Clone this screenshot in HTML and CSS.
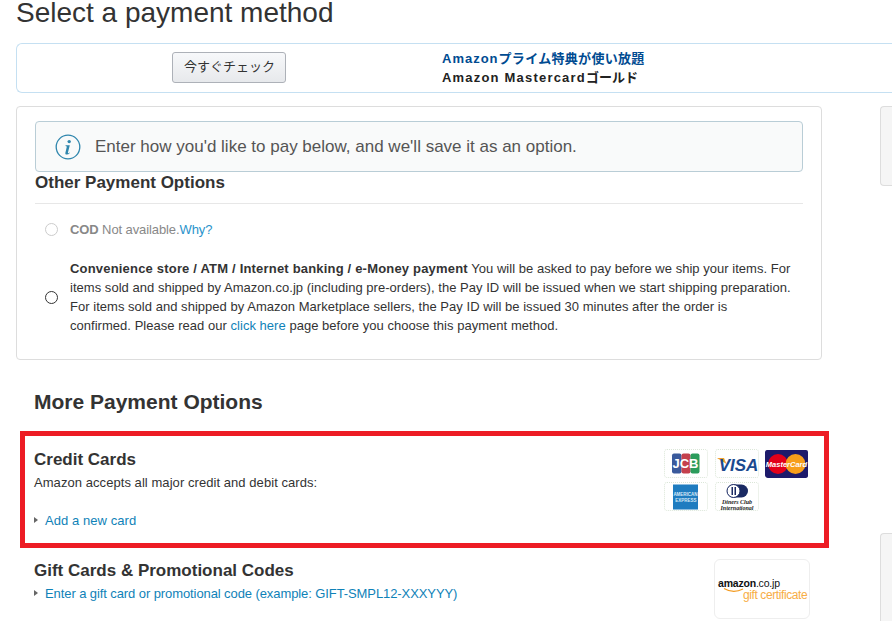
FILE: index.html

```html
<!DOCTYPE html>
<html>
<head>
  <title>Select a payment method</title>
  <meta charset="utf-8">
  <link rel="stylesheet" href="styles.css">
</head>
<body>
  <h1>Select a payment method</h1>

  <div class="promo">
    <button class="promo-btn">今すぐチェック</button>
    <div class="promo-text">
      <div class="promo-title"><span class="promo-en">Amazon</span>プライム特典が使い放題</div>
      <div class="promo-sub"><span class="promo-en">Amazon Mastercard</span>ゴールド</div>
    </div>
  </div>

  <div class="page">
    <div class="main">
      <div class="options-box">
        <div class="notice">
          <svg class="notice-icon" viewBox="0 0 26 26">
            <circle cx="13" cy="13" r="11.8" fill="none" stroke="#2f86ad" stroke-width="1.3"/>
            <circle cx="14.2" cy="7.6" r="1.7" fill="#2f86ad"/>
            <path d="M10.6 11.2h4.2l-1.9 7.6c-.1.5.3.6.9.3l.8-.5.2.5c-1 1-2 1.5-3 1.5-1.200 0-1.700-.7-1.400-1.900l1.400-5.900c-.1-.5-.5-.7-1.300-.8z" fill="#2f86ad"/>
          </svg>
          <span>Enter how you'd like to pay below, and we'll save it as an option.</span>
        </div>
        <h2 class="options-title">Other Payment Options</h2>
        <div class="option option-disabled">
          <span class="radio"></span>
          <div class="option-text"><b>COD</b> Not available.<a href="#">Why?</a></div>
        </div>
        <div class="option">
          <span class="radio"></span>
          <div class="option-text"><b>Convenience store / ATM / Internet banking / e-Money payment</b> You will be asked to pay before we ship your items. For items sold and shipped by Amazon.co.jp (including pre-orders), the Pay ID will be issued when we start shipping preparation. For items sold and shipped by Amazon Marketplace sellers, the Pay ID will be issued 30 minutes after the order is confirmed. Please read our <a href="#">click here</a> page before you choose this payment method.</div>
        </div>
      </div>

      <h2 class="more-title">More Payment Options</h2>

      <div class="credit-box">
        <div class="credit-info">
          <h3>Credit Cards</h3>
          <p>Amazon accepts all major credit and debit cards:</p>
          <a class="expander" href="#">Add a new card</a>
        </div>
        <div class="card-logos">
          <div class="card-logo">
            <svg viewBox="0 0 44 28" width="44" height="28">
              <rect x="8" y="3.500" width="9.500" height="20" rx="2" fill="#3a5a9c"/>
              <rect x="17.500" y="3.500" width="9" height="20" rx="2" fill="#c4404d"/>
              <rect x="26.500" y="3.500" width="9" height="20" rx="2" fill="#2b9c5c"/>
              <text x="21.500" y="18" class="jcb-text">JCB</text>
            </svg>
          </div>
          <div class="card-logo">
            <svg viewBox="0 0 44 28" width="44" height="28">
              <path d="M2 8h7l2.500 6z" fill="#f0a030"/>
              <text x="23.500" y="21" class="visa-text">VISA</text>
            </svg>
          </div>
          <div class="card-logo card-logo-solid">
            <svg viewBox="0 0 44 28" width="44" height="28">
              <rect width="43" height="28" rx="2" fill="#1d1a6b"/>
              <circle cx="13" cy="14" r="10" fill="#e2001a"/>
              <circle cx="30.500" cy="14" r="10" fill="#f79e1b"/>
              <text x="21.500" y="16.500" class="mc-text">MasterCard</text>
            </svg>
          </div>
          <div class="card-logo">
            <svg viewBox="0 0 44 28" width="44" height="28">
              <rect x="9" y="1.500" width="25" height="25" fill="#1f7cc0"/>
              <text x="21.500" y="12.500" class="amex-text">AMERICAN</text>
              <text x="22" y="18.500" class="amex-text">EXPRESS</text>
            </svg>
          </div>
          <div class="card-logo">
            <svg viewBox="0 0 44 28" width="44" height="28">
              <rect x="12" y="1.500" width="21" height="13" rx="6.500" fill="#1a2a63"/>
              <circle cx="18.500" cy="8" r="6.500" fill="#fff" stroke="#1a2a63"/>
              <rect x="16.500" y="4" width="1.500" height="8" fill="#1a2a63"/>
              <rect x="19.500" y="4" width="1.500" height="8" fill="#1a2a63"/>
              <text x="22" y="21" class="diners-text">Diners Club</text>
              <text x="22" y="26.500" class="diners-text">International</text>
            </svg>
          </div>
        </div>
      </div>

      <div class="gift-row">
        <div class="gift-info">
          <h3>Gift Cards &amp; Promotional Codes</h3>
          <a class="expander gift-link" href="#">Enter a gift card or promotional code (example: GIFT-SMPL12-XXXYYY)</a>
        </div>
        <div class="gift-logo">
          <svg viewBox="0 0 96 60" width="96" height="60">
            <text x="4" y="28" class="gift-amazon">amazon<tspan class="gift-jp">.co.jp</tspan></text>
            <path d="M10 29.500c6 3.500 13 3.500 19 .5" fill="none" stroke="#f39a1f" stroke-width="1.300"/>
            <text x="29" y="40" class="gift-cert">gift certificate</text>
          </svg>
        </div>
      </div>
    </div>

    <div class="side">
      <div class="side-box side-box-top"></div>
      <div class="side-box side-box-bottom"></div>
    </div>
  </div>
</body>
</html>
```

FILE: styles.css

```css
body {
  font-family: "Liberation Sans", Arial, sans-serif;
  font-size: 13px;
  line-height: 19px;
  color: #333;
  margin: 0;
  height: 621px;
  overflow: hidden;
  background-color: #fff;
}

a {
  color: #0f82b8;
  text-decoration: none;
}

h1 {
  font-size: 28px;
  font-weight: 400;
  line-height: 26px;
  margin: 0 0 0 16px;
  color: #333;
}

.promo {
  display: flex;
  align-items: center;
  height: 48px;
  margin: 17px 0 0 16px;
  border: 1px solid #c5e0f2;
  border-right: none;
  border-radius: 6px 0 0 6px;
}

.promo-btn {
  width: 114px;
  height: 31px;
  margin: -2px 0 0 155px;
  padding: 0 0 3px 1px;
  font-family: "Noto Sans CJK JP", sans-serif;
  font-size: 13px;
  line-height: 20px;
  color: #333;
  background: linear-gradient(#f7f8fa, #e7e9ec);
  border: 1px solid #adb1b8;
  border-radius: 3px;
}

.promo-text {
  margin-left: 156px;
  font-family: "Liberation Sans", "Noto Sans CJK JP", sans-serif;
  font-size: 13px;
  font-weight: 700;
  line-height: 19px;
}

.promo-en {
  letter-spacing: 1px;
}

.promo-title {
  color: #004b91;
  letter-spacing: 0.3px;
}

.promo-sub {
  color: #222;
}

.promo-sub .promo-en {
  letter-spacing: 1.2px;
}

.page {
  display: flex;
  margin: 13px 0 0 16px;
}

.main {
  width: 806px;
  flex-shrink: 0;
}

.options-box {
  box-sizing: border-box;
  height: 254px;
  padding: 14px 18px 0;
  border: 1px solid #ddd;
  border-radius: 4px;
}

.notice {
  display: flex;
  align-items: center;
  gap: 14px;
  box-sizing: border-box;
  height: 51px;
  padding-left: 19px;
  font-size: 17px;
  color: #555;
  background-color: #f9fafa;
  border: 1px solid #b9cdd6;
  border-radius: 4px;
}

.notice-icon {
  width: 26px;
  height: 26px;
}

.options-title {
  font-size: 17px;
  font-weight: 700;
  line-height: 20px;
  margin: 1px 0 0;
  padding: 0 0 10px;
  color: #333;
  border-bottom: 1px solid #e7e7e7;
}

.option {
  display: flex;
  align-items: center;
}

.option-disabled {
  margin-top: 16px;
  color: #888;
}

.option-disabled a {
  color: #2a93cb;
}

.option + .option {
  margin-top: 20px;
}

.radio {
  box-sizing: border-box;
  flex-shrink: 0;
  width: 13px;
  height: 13px;
  margin: 0 12px 0 10px;
  background-color: #fff;
  border: 1.500px solid #333;
  border-radius: 50%;
}

.option-disabled .radio {
  border: 1px solid #ccc;
}

.option-text {
  padding-right: 12px;
  letter-spacing: 0.03px;
}

.option-text b {
  letter-spacing: 0.19px;
}

.option-disabled .option-text,
.option-disabled .option-text b {
  letter-spacing: -0.1px;
}

.more-title {
  font-size: 21px;
  font-weight: 700;
  line-height: 24px;
  margin: 30px 0 0 18px;
  color: #333;
}

.credit-box {
  display: flex;
  justify-content: space-between;
  box-sizing: border-box;
  width: 809px;
  height: 117px;
  margin: 17px 0 0 4px;
  padding: 14px 15px 0 9px;
  border: 5px solid #ed1c24;
}

h3 {
  font-size: 17px;
  font-weight: 700;
  line-height: 20px;
  margin: 0;
  color: #333;
}

.credit-info p {
  margin: 3px 0 19px;
  letter-spacing: 0.06px;
}

.expander {
  position: relative;
  display: block;
  padding-left: 11px;
  letter-spacing: 0.06px;
}

.gift-link {
  letter-spacing: -0.09px;
}

.expander::before {
  content: "";
  position: absolute;
  left: 0;
  top: 6px;
  border-left: 4px solid #666;
  border-top: 3.500px solid transparent;
  border-bottom: 3.500px solid transparent;
}

.card-logos {
  display: grid;
  grid-template-columns: repeat(3, 44px);
  column-gap: 6.500px;
  row-gap: 4px;
  align-content: start;
  margin-top: -1px;
}

.card-logo {
  box-sizing: border-box;
  display: flex;
  height: 29px;
  border: 1px dotted #dbe6d8;
  border-radius: 3px;
  align-items: center;
  justify-content: center;
  overflow: hidden;
}

.card-logo svg {
  flex-shrink: 0;
}

.card-logo-solid {
  border: none;
}

.jcb-text {
  font-size: 13px;
  font-weight: 700;
  fill: #fff;
  text-anchor: middle;
}

.visa-text {
  font-size: 17px;
  font-weight: 700;
  font-style: italic;
  fill: #1a4a8f;
  text-anchor: middle;
}

.mc-text {
  font-size: 7.500px;
  font-weight: 700;
  font-style: italic;
  fill: #fff;
  text-anchor: middle;
}

.amex-text {
  font-size: 4.500px;
  font-weight: 700;
  fill: #d5e8f5;
  text-anchor: middle;
}

.diners-text {
  font-family: "Liberation Serif", serif;
  font-size: 6px;
  font-style: italic;
  font-weight: 700;
  fill: #222;
  text-anchor: middle;
}

.gift-row {
  display: flex;
  justify-content: space-between;
  width: 776px;
  margin: 11px 0 0 18px;
}

.gift-info {
  padding-top: 2px;
}

.gift-info h3 {
  margin-bottom: 3px;
}

.gift-logo {
  box-sizing: border-box;
  display: flex;
  width: 96px;
  height: 60px;
  border: 1px solid #eee;
  border-radius: 6px;
  overflow: hidden;
}

.gift-logo svg {
  flex-shrink: 0;
  margin: -1px;
}

.gift-amazon {
  font-size: 10.500px;
  font-weight: 700;
  letter-spacing: -0.2px;
  fill: #111;
}

.gift-jp {
  font-weight: 400;
}

.gift-cert {
  font-size: 12px;
  letter-spacing: -0.4px;
  fill: #f7ad45;
}

.side {
  flex: 1;
  margin-left: 58px;
}

.side-box {
  box-sizing: border-box;
  background-color: #f5f5f5;
  border: 1px solid #ddd;
  border-right: none;
  border-radius: 4px 0 0 4px;
}

.side-box-top {
  height: 80px;
}

.side-box-bottom {
  height: 88px;
  margin-top: 347px;
  border-bottom: none;
  border-radius: 4px 0 0 0;
}
```
